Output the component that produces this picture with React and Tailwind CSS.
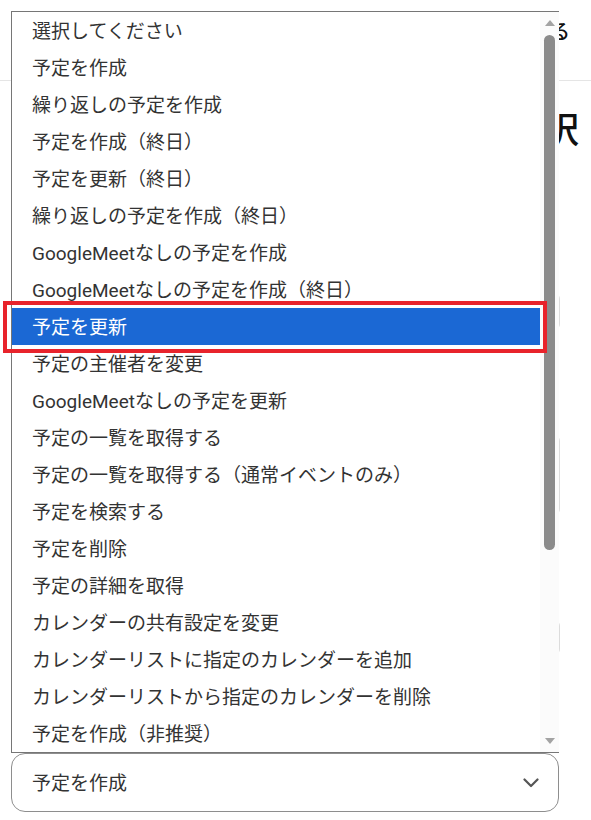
import React from "react";

const items = [
  "選択してください",
  "予定を作成",
  "繰り返しの予定を作成",
  "予定を作成（終日）",
  "予定を更新（終日）",
  "繰り返しの予定を作成（終日）",
  "GoogleMeetなしの予定を作成",
  "GoogleMeetなしの予定を作成（終日）",
  "予定を更新",
  "予定の主催者を変更",
  "GoogleMeetなしの予定を更新",
  "予定の一覧を取得する",
  "予定の一覧を取得する（通常イベントのみ）",
  "予定を検索する",
  "予定を削除",
  "予定の詳細を取得",
  "カレンダーの共有設定を変更",
  "カレンダーリストに指定のカレンダーを追加",
  "カレンダーリストから指定のカレンダーを削除",
  "予定を作成（非推奨）",
];

export default function App() {
  return (
    <div
      className="relative w-[591px] h-[820px] overflow-hidden bg-white"
      style={{ fontFamily: '"Roboto", "Noto Sans CJK JP", sans-serif' }}
    >
      {/* page behind */}
      <div className="flex flex-col">
        <div className="h-[81px] border-b border-[#e5e5e5] flex justify-end items-start pt-[17px] pr-[21px]">
          <span className="text-[20px] leading-[30px] text-[#111] font-medium">アクションを設定する</span>
        </div>
        <div className="flex justify-end pt-[25px] pr-[12px]">
          <span className="text-[36px] leading-[50px] text-[#111] font-medium">アクションを選択</span>
        </div>
        <div className="ml-[11px] w-[549px] mt-[137px] h-[37px] border border-[#dcdcdc] rounded-md" />
        <div className="ml-[11px] w-[549px] mt-[105px] h-[80px] border border-[#dcdcdc] rounded-md" />
        <div className="ml-[11px] w-[549px] mt-[105px] h-[35px] border border-[#dcdcdc] rounded-md" />
        <div className="ml-[11px] w-[548px] mt-[98px] h-[59px] border border-[#8e8e8e] rounded-[14px] flex items-center justify-between pl-[20px] pr-[19px]">
          <span className="text-[19px] text-[#333] pt-[3px]">予定を作成</span>
          <svg width="16" height="10" viewBox="0 0 16 10" fill="none">
            <path d="M1.5 1.5 L8 8 L14.5 1.5" stroke="#555" strokeWidth="2.2" strokeLinecap="round" strokeLinejoin="round" />
          </svg>
        </div>
      </div>

      {/* open dropdown list */}
      <div className="absolute left-[11px] top-[11px] w-[548px] h-[742px] bg-white border-l border-t border-b border-[#767676] flex">
        <div className="flex-1 flex flex-col">
          {items.map((t, i) => (
            <div
              key={i}
              className={
                "h-[37px] flex items-center pl-[20px] pt-[4px] text-[19px] whitespace-nowrap " +
                (i === 8 ? "bg-[#1b68d4] text-white" : "text-[#333]")
              }
            >
              {t}
            </div>
          ))}
        </div>
        <div className="w-[19px] bg-[#fbfbfb] flex flex-col items-center pt-[8px] pb-[8px]">
          <svg width="10" height="6" viewBox="0 0 10 6">
            <path d="M0 6 L5 0 L10 6 Z" fill="#a3a3a3" />
          </svg>
          <div className="mt-[9px] w-[11px] h-[515px] rounded-full bg-[#8b8b8b]" />
          <div className="flex-1" />
          <svg width="10" height="6" viewBox="0 0 10 6">
            <path d="M0 0 L10 0 L5 6 Z" fill="#a3a3a3" />
          </svg>
        </div>
      </div>

      {/* annotation highlight */}
      <div className="absolute left-[3px] top-[301px] w-[544px] h-[52px] border-[4px] border-[#e8232b]" />
    </div>
  );
}
